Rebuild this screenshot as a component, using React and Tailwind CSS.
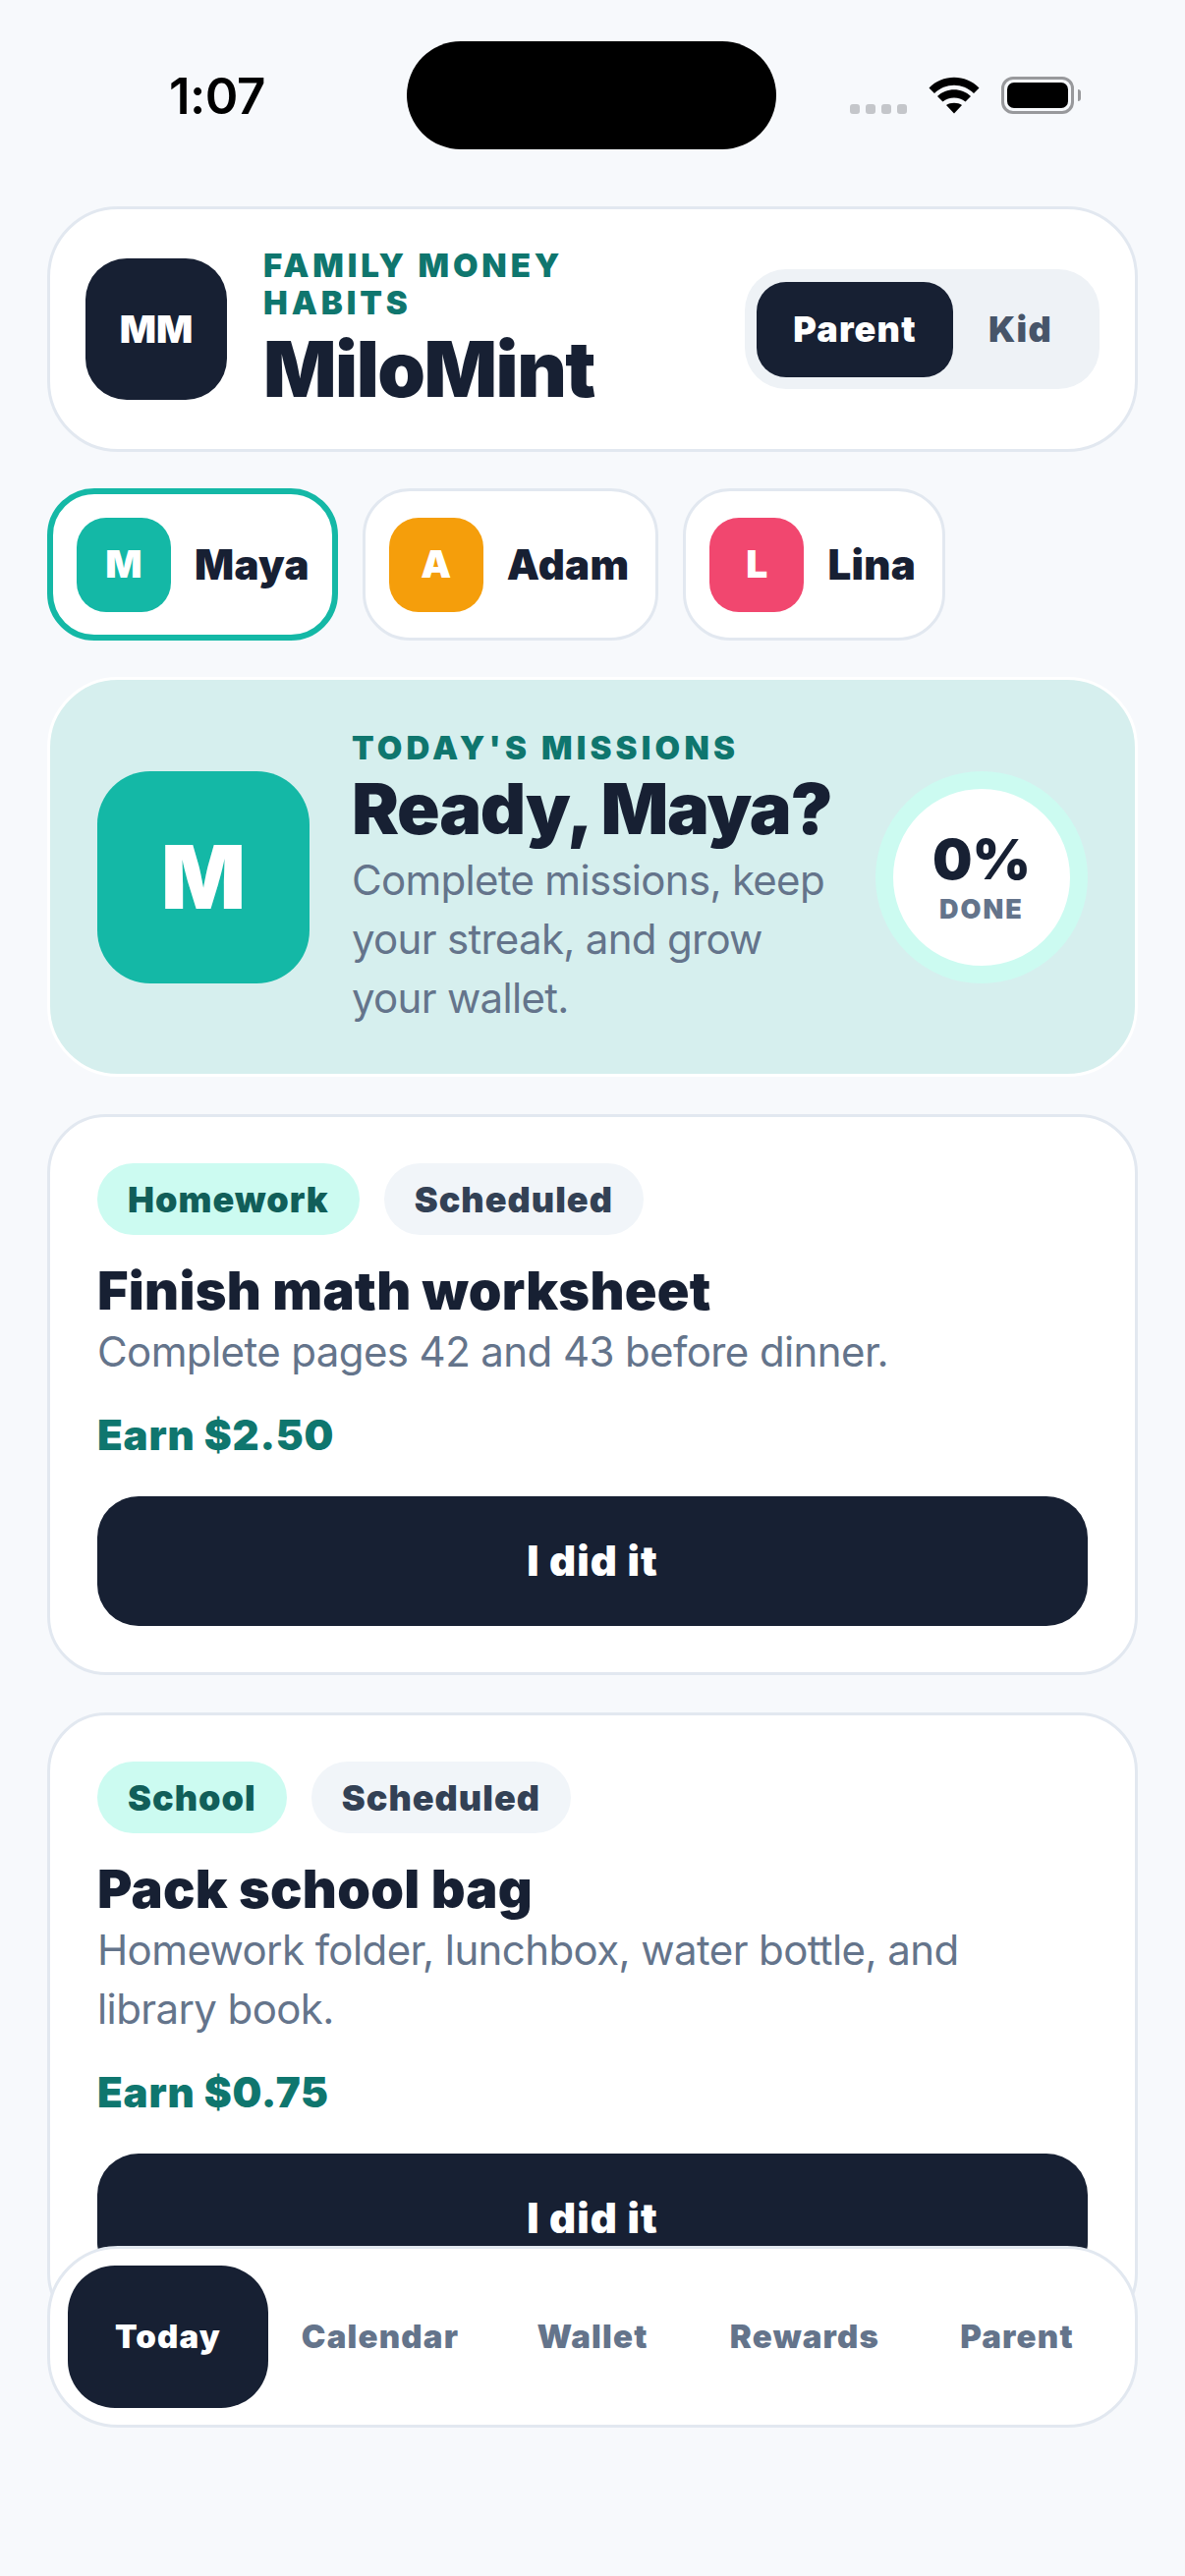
import { useState } from 'react'

const kids = [
  { id: 'maya', name: 'Maya', letter: 'M', color: 'bg-[#14b8a6]' },
  { id: 'adam', name: 'Adam', letter: 'A', color: 'bg-[#f59e0b]' },
  { id: 'lina', name: 'Lina', letter: 'L', color: 'bg-[#f1476f]' },
]

const missions = [
  { id: 1, tag: 'Homework', title: 'Finish math worksheet', text: 'Complete pages 42 and 43 before dinner.', earn: 'Earn $2.50' },
  { id: 2, tag: 'School', title: 'Pack school bag', text: 'Homework folder, lunchbox, water bottle, and library book.', earn: 'Earn $0.75' },
]

const tabs = ['Today', 'Calendar', 'Wallet', 'Rewards', 'Parent']

function StatusBar() {
  return (
    <div className="flex h-[210px] items-start justify-between pl-[172px] pr-[106px]">
      <span className="mt-[68px] text-[51px] leading-[60px] font-semibold tracking-[-0.5px] text-black">1:07</span>
      <div className="mt-[78px] flex items-center">
        <div className="mt-[28px] flex gap-[6px]">
          {[0, 1, 2, 3].map(i => (
            <span key={i} className="h-[10px] w-[10px] rounded-[3px] bg-[#c4c6ca]" />
          ))}
        </div>
        <svg className="ml-[22px]" width="52" height="38" viewBox="0 0 52 38">
          <path d="M0.5 11.5 C14 -3 38 -3 51.5 11.5 L46 17 C35 6 17 6 6 17 Z" fill="#000" />
          <path d="M9 20 C18 11 34 11 43 20 L37.5 25.5 C31 20 21 20 14.5 25.5 Z" fill="#000" />
          <path d="M18 29 C22 26 30 26 34 29 L26 37.5 Z" fill="#000" />
        </svg>
        <div className="ml-[22px] flex items-center">
          <div className="h-[38px] w-[74px] rounded-[12px] border-[3px] border-[#98999c] p-[3px]">
            <div className="h-full w-full rounded-[7px] bg-black" />
          </div>
          <div className="ml-[4px] h-[12px] w-[3px] rounded-r-full bg-[#98999c]" />
        </div>
      </div>
    </div>
  )
}

function Header({ mode, setMode }) {
  return (
    <div className="flex h-[250px] items-center rounded-[72px] border-[3px] border-[#e2e8f0] bg-white pl-[36px] pr-[36px]">
      <div className="flex h-[144px] w-[144px] shrink-0 items-center justify-center rounded-[42px] bg-[#172033] text-[39px] font-black text-white">MM</div>
      <div className="mb-[2px] ml-[37px] w-[360px]">
        <div className="text-[33px] leading-[38px] font-black tracking-[3.9px] text-[#0f766e]">FAMILY MONEY HABITS</div>
        <div className="mt-[7px] text-[78px] leading-[84px] font-black tracking-[-1.5px] text-[#172033]">MiloMint</div>
      </div>
      <div className="ml-auto flex h-[122px] w-[361px] items-center rounded-[42px] bg-[#eef2f6] px-[12px]">
        {['Parent', 'Kid'].map(m => (
          <button
            key={m}
            onClick={() => setMode(m)}
            className={`flex h-[97px] items-center justify-center rounded-[30px] text-[36px] font-black tracking-[1.2px] ${
              mode === m ? 'bg-[#172033] text-white' : 'text-[#475569]'
            } ${m === 'Parent' ? 'w-[200px]' : 'flex-1'}`}
          >
            {m}
          </button>
        ))}
      </div>
    </div>
  )
}

function KidPicker({ active, setActive }) {
  return (
    <div className="mt-[37px] flex gap-[25px]">
      {kids.map(kid => (
        <button
          key={kid.id}
          onClick={() => setActive(kid.id)}
          className={`flex h-[155px] items-center rounded-[48px] bg-white ${
            active === kid.id ? 'border-[6px] border-[#14b8a6] pr-[23px] pl-[24px]' : 'border-[3px] border-[#e2e8f0] pr-[27px] pl-[24px]'
          }`}
        >
          <span className={`flex h-[96px] w-[96px] items-center justify-center rounded-[30px] text-[39px] font-black text-white ${kid.color}`}>{kid.letter}</span>
          <span className="ml-[24px] text-[42px] font-black tracking-[0.3px] text-[#172033]">{kid.name}</span>
        </button>
      ))}
    </div>
  )
}

function Hero() {
  return (
    <div className="mt-[37px] flex h-[407px] items-center rounded-[72px] border-[3px] border-white bg-[#d6efee] pl-[48px] pr-[48px]">
      <div className="flex h-[216px] w-[216px] shrink-0 items-center justify-center rounded-[54px] bg-[#14b8a6] text-[90px] font-black text-white">M</div>
      <div className="mt-[2px] ml-[43px] w-[500px]">
        <div className="text-[33px] leading-[40px] font-black tracking-[4.2px] text-[#0f766e]">TODAY'S MISSIONS</div>
        <div className="mt-[3px] text-[72px] leading-[78px] font-black tracking-[-1.3px] whitespace-nowrap text-[#172033]">Ready, Maya?</div>
        <p className="mt-[4px] text-[42px] leading-[60px] tracking-[-0.7px] text-[#64748b]">Complete missions, keep your streak, and grow your wallet.</p>
      </div>
      <div className="ml-auto flex h-[216px] w-[216px] shrink-0 flex-col items-center justify-center rounded-full border-[18px] border-[#ccfbf1] bg-white">
        <span className="text-[57px] leading-[60px] font-black text-[#172033]">0%</span>
        <span className="mt-[6px] text-[27px] leading-[30px] font-black tracking-[2px] text-[#64748b]">DONE</span>
      </div>
    </div>
  )
}

function MissionCard({ mission }) {
  return (
    <div className="mt-[38px] rounded-[60px] border-[3px] border-[#e2e8f0] bg-white px-[48px] pt-[47px] pb-[47px]">
      <div className="flex gap-[25px]">
        <span className="flex h-[73px] items-center rounded-full bg-[#ccfbf1] px-[31px] text-[36px] font-black tracking-[1px] text-[#115e59]">{mission.tag}</span>
        <span className="flex h-[73px] items-center rounded-full bg-[#f1f5f9] px-[31px] text-[36px] font-black tracking-[1px] text-[#334155]">Scheduled</span>
      </div>
      <h3 className="mt-[25px] text-[54px] leading-[64px] font-black tracking-[0.3px] text-[#172033]">{mission.title}</h3>
      <p className="text-[42px] leading-[60px] tracking-[-0.6px] text-[#64748b]">{mission.text}</p>
      <div className="mt-[28px] text-[42px] leading-[54px] font-black tracking-[0.8px] text-[#0f766e]">{mission.earn}</div>
      <button className="mt-[35px] flex h-[132px] w-full items-center justify-center rounded-[42px] bg-[#172033] pb-[2px] text-[42px] font-black tracking-[1.1px] text-white">I did it</button>
    </div>
  )
}

function BottomNav({ tab, setTab }) {
  return (
    <div className="absolute top-[2286px] left-[48px] flex h-[185px] w-[1110px] items-center gap-[12px] rounded-[72px] border-[3px] border-[#e2e8f0] bg-white px-[18px]">
      {tabs.map(t => (
        <button
          key={t}
          onClick={() => setTab(t)}
          className={`flex h-[145px] flex-1 items-center justify-center rounded-[48px] text-[33px] font-black tracking-[1.2px] ${
            tab === t ? 'bg-[#172033] text-white' : 'text-[#64748b]'
          }`}
        >
          {t}
        </button>
      ))}
    </div>
  )
}

export default function App() {
  const [mode, setMode] = useState('Parent')
  const [active, setActive] = useState('maya')
  const [tab, setTab] = useState('Today')

  return (
    <div className="relative h-[2622px] w-[1206px] overflow-hidden bg-[#f7f9fc] font-['Inter',sans-serif]">
      <div className="absolute top-[42px] left-[414px] h-[110px] w-[376px] rounded-[55px] bg-black" />
      <StatusBar />
      <div className="px-[48px]">
        <Header mode={mode} setMode={setMode} />
        <KidPicker active={active} setActive={setActive} />
        <Hero />
        {missions.map(m => (
          <MissionCard key={m.id} mission={m} />
        ))}
      </div>
      <BottomNav tab={tab} setTab={setTab} />
    </div>
  )
}
